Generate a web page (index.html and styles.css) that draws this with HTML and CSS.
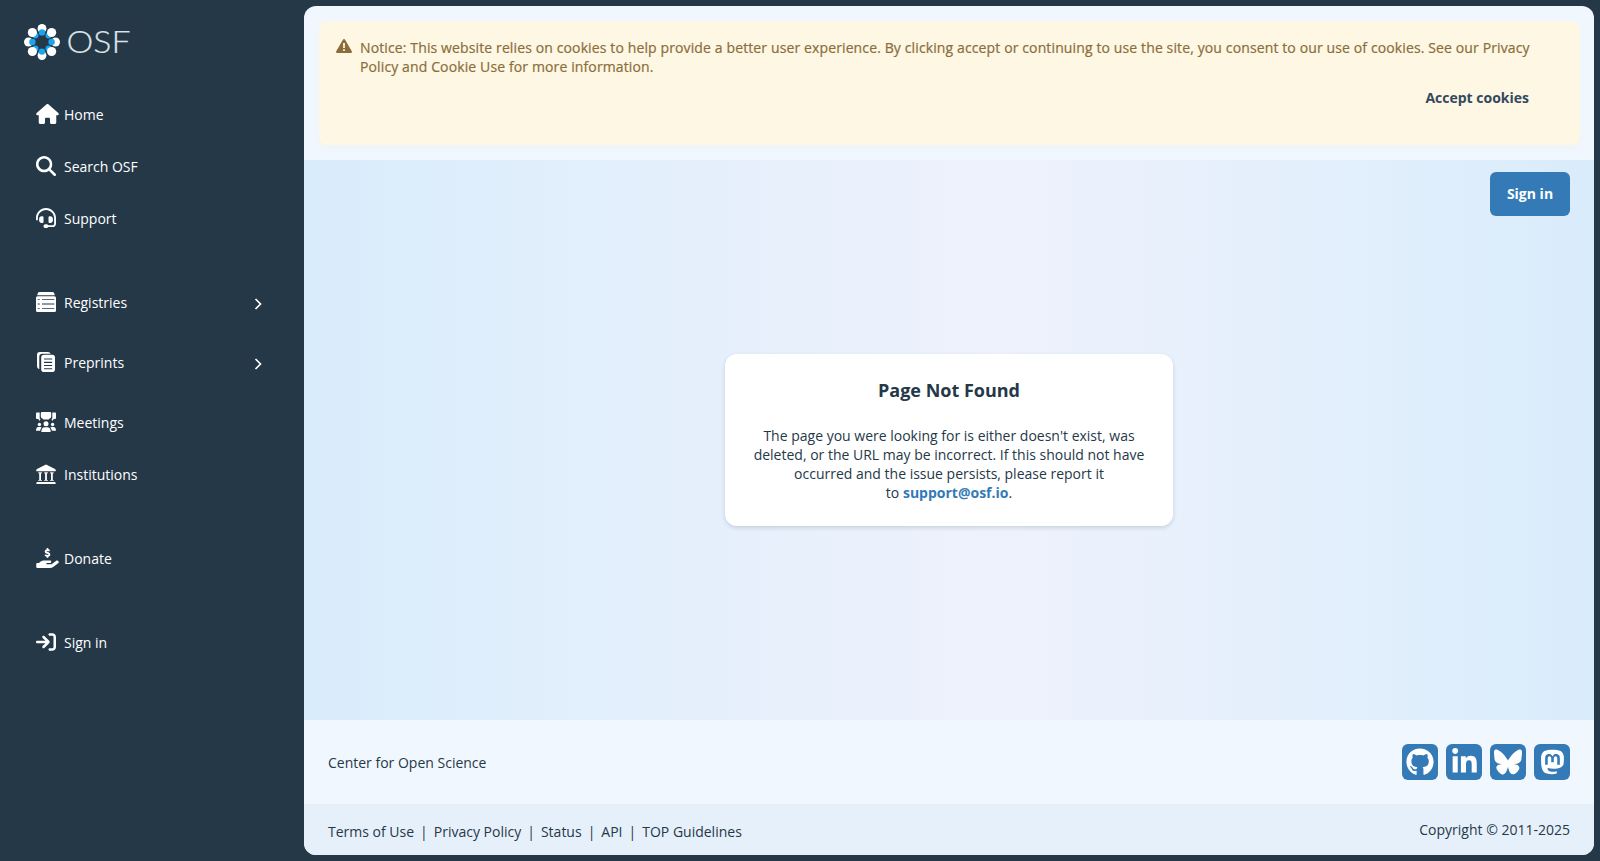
FILE: index.html
```html
<!DOCTYPE html>
<html lang="en">
<head>
    <meta charset="UTF-8">
    <meta name="viewport" content="width=device-width, initial-scale=1.0">
    <title>OSF | Page Not Found</title>
    <link rel="stylesheet" href="styles.css">
</head>
<body>
    <aside class="sidebar">
        <a class="logo" href="#">
            <svg width="112" height="36" viewBox="0 0 112 36">
                <g fill="#fff">
                    <ellipse cx="18" cy="4.6" rx="4.4" ry="4.6"/><ellipse cx="18" cy="31.4" rx="4.4" ry="4.6"/>
                    <ellipse cx="4.4" cy="18" rx="4.4" ry="4.6"/><ellipse cx="31.6" cy="18" rx="4.4" ry="4.6"/>
                </g>
                <g fill="#1aa5ee">
                    <circle cx="11.5" cy="11.5" r="3"/><circle cx="24.5" cy="11.5" r="3"/>
                    <circle cx="11.5" cy="24.5" r="3"/><circle cx="24.5" cy="24.5" r="3"/>
                    <circle cx="18" cy="8.4" r="3.2"/><circle cx="18" cy="27.6" r="3.2"/>
                    <circle cx="8.4" cy="18" r="3.2"/><circle cx="27.6" cy="18" r="3.2"/>
                </g>
                <g fill="#fff">
                    <circle cx="8.4" cy="8.5" r="4.6"/><circle cx="27.6" cy="8.5" r="4.6"/>
                    <circle cx="8.4" cy="27.5" r="4.6"/><circle cx="27.6" cy="27.5" r="4.6"/>
                </g>
                <text class="logo-text" x="42.5" y="29" textLength="64" lengthAdjust="spacingAndGlyphs">OSF</text>
            </svg>
        </a>

        <nav class="nav">
            <a class="nav-item" href="#">
                <svg class="icon icon-wide" viewBox="0 0 576 512"><path d="M575.8 255.5c0 18-15 32.1-32 32.1h-32l.7 160.2c0 2.7-.2 5.4-.5 8.1V472c0 22.1-17.9 40-40 40H456c-1.1 0-2.2 0-3.3-.1c-1.4 .1-2.8 .1-4.2 .1H416 392c-22.1 0-40-17.9-40-40V448 384c0-17.7-14.3-32-32-32H256c-17.7 0-32 14.3-32 32v64 24c0 22.1-17.9 40-40 40H160 128.1c-1.5 0-3-.1-4.5-.2c-1.2 .1-2.4 .2-3.6 .2H104c-22.1 0-40-17.9-40-40V360c0-.9 0-1.9 .1-2.8V287.6H32c-18 0-32-14-32-32.1c0-9 3-17 10-24L266.4 8c7-7 15-8 22-8s15 2 21 7L564.8 231.5c8 7 12 15 11 24z"/></svg>
                <span>Home</span>
            </a>
            <a class="nav-item" href="#">
                <svg class="icon" viewBox="0 0 512 512"><path d="M416 208c0 45.9-14.9 88.3-40 122.7L502.6 457.4c12.5 12.5 12.5 32.8 0 45.3s-32.8 12.5-45.3 0L330.7 376c-34.4 25.2-76.8 40-122.7 40C93.1 416 0 322.9 0 208S93.1 0 208 0S416 93.1 416 208zM208 352a144 144 0 1 0 0-288 144 144 0 1 0 0 288z"/></svg>
                <span>Search OSF</span>
            </a>
            <a class="nav-item" href="#">
                <svg class="icon" viewBox="0 0 512 512"><path d="M256 48C141.1 48 48 141.1 48 256v40c0 13.3-10.7 24-24 24s-24-10.7-24-24V256C0 114.6 114.6 0 256 0S512 114.6 512 256V400.1c0 48.6-39.4 88-88.1 88L313.6 488c-8.3 14.3-23.8 24-41.6 24H240c-26.5 0-48-21.5-48-48s21.5-48 48-48h32c17.8 0 33.3 9.7 41.6 24l110.4 .1c22.1 0 40-17.9 40-40V256c0-114.9-93.1-208-208-208zM144 208h16c17.7 0 32 14.3 32 32V352c0 17.7-14.3 32-32 32H144c-35.3 0-64-28.7-64-64V272c0-35.3 28.7-64 64-64zm224 0c35.3 0 64 28.7 64 64v48c0 35.3-28.7 64-64 64H352c-17.7 0-32-14.3-32-32V240c0-17.7 14.3-32 32-32h16z"/></svg>
                <span>Support</span>
            </a>

            <a class="nav-item nav-parent section-start" href="#">
                <svg class="icon icon-osf" viewBox="0 0 20 20"><path fill-rule="evenodd" d="M3.5 0h13q1.3 0 1.7 1.3l.6 1.9H1.2l.6-1.9Q2.2 0 3.5 0zM1.5 4.2h17q1.5 0 1.5 1.5v12.8q0 1.5-1.5 1.5h-17Q0 20 0 18.5V5.7q0-1.5 1.5-1.5zM1.7 7v.8h2V7zm4.3 0v.8h12.3V7zM1.7 11.6v.8h2v-.8zm4.3 0v.8h12.3v-.8zM1.7 16.2v.8h2v-.8zm4.3 0v.8h12.3v-.8z"/></svg>
                <span>Registries</span>
                <svg class="chevron" viewBox="0 0 8 12"><path d="M1.5 1l5 5-5 5"/></svg>
            </a>
            <a class="nav-item nav-parent" href="#">
                <svg class="icon icon-osf" viewBox="0 0 20 20"><path d="M3.8 0H12q2 0 2.7 1.7H6.5Q3.3 1.7 3.3 5v12.2Q1 16.8 1 14.2V2.8Q1 0 3.8 0z"/><path fill-rule="evenodd" d="M8 2.8h8.2Q19 2.8 19 5.6v11.6q0 2.8-2.8 2.8H8q-2.8 0-2.8-2.8V5.6Q5.2 2.8 8 2.8zM8 6.5v1.1h8.2V6.5zm0 3.3v1.1h8.2V9.8zm0 3.2v1.1h8.2V13zm0 3.2v1.1h8.2v-1.1z"/></svg>
                <span>Preprints</span>
                <svg class="chevron" viewBox="0 0 8 12"><path d="M1.5 1l5 5-5 5"/></svg>
            </a>
            <a class="nav-item nav-gap" href="#">
                <svg class="icon icon-osf" viewBox="0 0 20 20"><path d="M6 0h8q1.2 0 1.2 1.2v3.3Q15.2 6 14 6.3L12.5 7.500h-5L6 6.300Q4.800 6 4.800 4.500V1.200Q4.800 0 6 0zM.8.5h2.900v5.700q0 .8.8.8L3.700 8.900 2.300 7H1Q0 7 0 6V1.500Q0 .5.8.5zM19.200.5h-2.900v5.700q0 .8-.8.8l.8 1.900L17.700 7H19q1 0 1-1V1.500q0-1-.8-1z"/><circle cx="10" cy="11.8" r="2.5"/><circle cx="3.4" cy="12.5" r="1.7"/><circle cx="16.6" cy="12.5" r="1.7"/><path d="M5.3 20q0-4.800 3.500-4.800h2.400q3.500 0 3.500 4.800zM0 18.800q0-3.800 2.400-3.800h2q.8 0 1.300.5-1.300 1.200-1.600 3.300zM20 18.800q0-3.800-2.400-3.800h-2q-.8 0-1.300.5 1.300 1.200 1.600 3.300z"/></svg>
                <span>Meetings</span>
            </a>
            <a class="nav-item" href="#">
                <svg class="icon icon-osf" viewBox="0 0 20 20"><path d="M10 .4l9 4.7q.7.4.7 1.2v1H.3v-1q0-.8.7-1.2z"/><path d="M2.3 8h3.6v1.4H2.3zM8.2 8h3.6v1.4H8.2zM14.1 8h3.6v1.4h-3.6z" opacity=".7"/><path d="M3.2 9h1.8v6.9H6v.8H2.2v-.8h1zM9.1 9h1.8v6.9h1v.8H8.1v-.8h1zM15 9h1.800v6.900h1v.8H14v-.8h1zM.8 18h18.400l.6 1.900H.2z"/></svg>
                <span>Institutions</span>
            </a>

            <a class="nav-item section-start-lg" href="#">
                <svg class="icon icon-wide" viewBox="0 0 576 512"><path d="M312 24V34.5c6.4 1.2 12.6 2.7 18.2 4.2c12.8 3.4 20.4 16.6 17 29.4s-16.6 20.4-29.4 17c-10.9-2.9-21.1-4.9-30.2-5c-7.3-.1-14.7 1.7-19.4 4.4c-2.1 1.3-3.1 2.4-3.5 3c-.3 .5-.7 1.2-.7 2.8c0 .3 0 .5 0 .6c.2 .2 .9 1.2 3.3 2.6c5.8 3.5 14.4 6.2 27.4 10.1l.9 .3c11.1 3.3 25.9 7.8 37.9 15.3c13.7 8.6 26.1 22.9 26.4 44.9c.3 22.5-11.4 38.9-26.7 48.5c-6.7 4.1-13.9 7-21.3 8.8V232c0 13.3-10.7 24-24 24s-24-10.7-24-24V220.6c-9.5-2.3-18.2-5.3-25.6-7.8c-2.1-.7-4.1-1.4-6-2c-12.6-4.2-19.4-17.8-15.2-30.4s17.8-19.4 30.4-15.2c2.6 .9 5 1.7 7.3 2.5c13.6 4.6 23.4 7.9 33.9 8.3c8 .3 15.1-1.6 19.2-4.1c1.9-1.2 2.8-2.2 3.2-2.9c.4-.6 .9-1.8 .8-4.1l0-.2c0-1 0-2.1-4-4.6c-5.7-3.6-14.3-6.4-27.1-10.3l-1.9-.6c-10.8-3.2-25-7.5-36.4-14.4c-13.5-8.1-26.5-22-26.6-44.1c-.1-22.9 12.9-38.6 27.7-47.4c6.4-3.8 13.3-6.4 20.2-8.2V24c0-13.3 10.7-24 24-24s24 10.7 24 24zM568.2 336.3c13.1 17.8 9.3 42.8-8.5 55.9L433.1 485.5c-23.4 17.2-51.6 26.5-80.7 26.5H192 32c-17.7 0-32-14.3-32-32V416c0-17.7 14.3-32 32-32H68.8l44.9-36c22.7-18.2 50.9-28 80-28H272h16 64c17.7 0 32 14.3 32 32s-14.3 32-32 32H288 272c-8.8 0-16 7.2-16 16s7.2 16 16 16H392.6l119.7-88.2c17.8-13.1 42.8-9.3 55.9 8.5z"/></svg>
                <span>Donate</span>
            </a>
            <a class="nav-item section-start-lg" href="#">
                <svg class="icon" viewBox="0 0 512 512"><path d="M352 96l64 0c17.7 0 32 14.3 32 32l0 256c0 17.7-14.3 32-32 32l-64 0c-17.7 0-32 14.3-32 32s14.3 32 32 32l64 0c53 0 96-43 96-96l0-256c0-53-43-96-96-96l-64 0c-17.7 0-32 14.3-32 32s14.3 32 32 32zm-9.4 182.6c12.5-12.5 12.5-32.8 0-45.3l-128-128c-12.5-12.5-32.8-12.5-45.3 0s-12.5 32.8 0 45.3L242.7 224 32 224c-17.7 0-32 14.3-32 32s14.3 32 32 32l210.7 0-73.4 73.4c-12.5 12.5-12.5 32.8 0 45.3s32.8 12.5 45.3 0l128-128z"/></svg>
                <span>Sign in</span>
            </a>
        </nav>
    </aside>

    <div class="content">
        <div class="notice-area">
            <div class="notice">
                <svg class="notice-icon" viewBox="0 0 16 14"><path fill-rule="evenodd" d="M8 0q.7 0 1.1.7l6.7 11.5q.6 1.8-1 1.8H1.2q-1.6 0-1-1.8L6.9.7Q7.3 0 8 0zM7.1 4v5h1.800V4zm0 6.200V12h1.800v-1.800z"/></svg>
                <div class="notice-body">
                    <p>Notice: This website relies on cookies to help provide a better user experience. By clicking accept or continuing to use the site, you consent to our use of cookies. See our Privacy Policy and Cookie Use for more information.</p>
                    <button type="button" class="accept">Accept cookies</button>
                </div>
            </div>
        </div>

        <main class="main">
            <div class="topbar">
                <button type="button" class="signin">Sign in</button>
            </div>
            <div class="message">
                <section class="card">
                    <h1>Page Not Found</h1>
                    <p>The page you were looking for is either doesn't exist, was deleted, or the URL may be incorrect. If this should not have occurred and the issue persists, please report it to&nbsp;<a href="#">support@osf.io</a>.</p>
                </section>
            </div>
        </main>

        <footer>
            <div class="footer-top">
                <span>Center for Open Science</span>
                <div class="socials">
                    <a class="social" href="#" aria-label="GitHub">
                        <svg width="28" height="28" viewBox="0 0 496 512"><path fill-rule="evenodd" d="M244.8 8C106.1 8 0 113.3 0 252c0 110.9 69.8 205.8 169.5 239.2 12.8 2.3 17.3-5.6 17.3-12.1 0-6.2-.3-40.4-.3-61.4 0 0-70 15-84.7-29.8 0 0-11.4-29.1-27.8-36.6 0 0-22.9-15.7 1.6-15.4 0 0 24.9 2 38.6 25.8 21.9 38.6 58.6 27.5 72.9 20.9 2.3-16 8.8-27.1 16-33.7-55.9-6.2-112.3-14.3-112.3-110.5 0-27.5 7.6-41.3 23.6-58.9-2.6-6.5-11.1-33.3 2.6-67.9 20.9-6.5 69 27 69 27 20-5.6 41.5-8.5 62.8-8.5s42.8 2.9 62.8 8.5c0 0 48.1-33.6 69-27 13.7 34.7 5.2 61.4 2.6 67.9 16 17.7 25.8 31.5 25.8 58.9 0 96.5-58.9 104.2-114.8 110.5 9.2 7.9 17 22.9 17 46.4 0 33.7-.3 75.4-.3 83.6 0 6.5 4.6 14.4 17.3 12.1C428.2 457.8 496 362.9 496 252 496 113.3 383.5 8 244.8 8z"/></svg>
                    </a>
                    <a class="social" href="#" aria-label="LinkedIn">
                        <svg width="25" height="28" viewBox="0 0 448 512"><path d="M100.28 448H7.4V148.9h92.88zM53.79 108.1C24.09 108.1 0 83.5 0 53.8a53.79 53.79 0 0 1 107.58 0c0 29.7-24.1 54.3-53.79 54.3zM447.9 448h-92.68V302.4c0-34.7-.7-79.2-48.29-79.2-48.29 0-55.69 37.7-55.69 76.7V448h-92.78V148.9h89.08v40.8h1.3c12.4-23.5 42.69-48.3 87.88-48.3 94 0 111.28 61.9 111.28 142.3V448z"/></svg>
                    </a>
                    <a class="social" href="#" aria-label="Bluesky">
                        <svg width="28" height="28" viewBox="0 0 24 24"><path d="M12 10.8c-1.087-2.114-4.046-6.053-6.798-7.995C2.566.944 1.561 1.266.902 1.565.139 1.908 0 3.08 0 3.768c0 .69.378 5.65.624 6.479.815 2.736 3.713 3.66 6.383 3.364-3.912.58-7.387 2.005-2.83 7.078 5.013 5.19 6.87-1.113 7.823-4.308.953 3.195 2.05 9.271 7.733 4.308 4.267-4.308 1.172-6.498-2.74-7.078 2.67.297 5.568-.628 6.383-3.364.246-.828.624-5.79.624-6.478 0-.69-.139-1.861-.902-2.206-.659-.298-1.664-.62-4.3 1.24C16.046 4.748 13.087 8.687 12 10.8z"/></svg>
                    </a>
                    <a class="social" href="#" aria-label="Mastodon">
                        <svg width="25" height="28" viewBox="0 0 448 512"><path d="M433 179.11c0-97.2-63.71-125.7-63.71-125.7-62.52-28.7-228.56-28.4-290.48 0 0 0-63.72 28.5-63.72 125.7 0 115.7-6.6 259.4 105.63 289.1 40.51 10.7 75.32 13 103.33 11.4 50.81-2.8 79.32-18.1 79.32-18.1l-1.7-36.9s-36.31 11.4-77.12 10.1c-40.41-1.4-83-4.4-89.63-54a102.54 102.54 0 0 1-.9-13.9c85.63 20.9 158.65 9.1 178.75 6.7 56.12-6.7 105-41.3 111.23-72.9 9.8-49.8 9-121.5 9-121.5zm-75.12 125.2h-46.63v-114.2c0-49.7-64-51.6-64 6.9v62.5h-46.33V197c0-58.5-64-56.6-64-6.9v114.2H90.19c0-122.1-5.2-147.9 18.41-175 25.9-28.9 79.82-30.8 103.83 6.1l11.6 19.5 11.6-19.5c24.11-37.1 78.12-34.8 103.83-6.1 23.71 27.3 18.4 53 18.4 175z"/></svg>
                    </a>
                </div>
            </div>
            <div class="footer-bottom">
                <div class="links">
                    <a href="#">Terms of Use</a><span>|</span>
                    <a href="#">Privacy Policy</a><span>|</span>
                    <a href="#">Status</a><span>|</span>
                    <a href="#">API</a><span>|</span>
                    <a href="#">TOP Guidelines</a>
                </div>
                <span class="copyright">Copyright © 2011-2025</span>
            </div>
        </footer>
    </div>
</body>
</html>
```
FILE: styles.css
```css
* {
    box-sizing: border-box;
}

body {
    display: flex;
    height: 100vh;
    margin: 0;
    padding: 6px 6px 6px 0;
    overflow: hidden;
    background-color: #253848;
    color: #253848;
    font-family: "Open Sans", sans-serif;
    font-size: 14px;
    line-height: 19px;
}

a {
    color: inherit;
    text-decoration: none;
}

p,
h1 {
    margin: 0;
}

button {
    border: none;
    padding: 0;
    background: none;
    font: inherit;
    font-weight: 700;
    cursor: pointer;
}

/* Sidebar */
.sidebar {
    width: 304px;
    flex: none;
    padding: 18px 24px 0;
    color: #fff;
}

.logo {
    display: block;
    height: 64px;
}

.logo svg {
    overflow: visible;
}

.logo-text {
    font-family: Lato, sans-serif;
    font-size: 31px;
    font-weight: 300;
    fill: #dfe3e6;
    stroke: #dfe3e6;
    stroke-width: 0.2;
}

.nav-item {
    display: flex;
    align-items: center;
    height: 52px;
    padding: 0 16px 0 12px;
}

.nav-item span {
    flex: 1;
}

.nav-parent {
    height: 60px;
}

.section-start {
    margin-top: 28px;
}

.nav-gap {
    margin-top: 4px;
}

.section-start-lg {
    margin-top: 32px;
}

.icon {
    width: 20px;
    height: 20px;
    margin: 0 8px 1px 0;
    fill: #fff;
}

.icon-wide {
    width: 23px;
    margin-right: 5px;
}

.icon-osf {
    margin-bottom: 0;
}

.chevron {
    width: 8px;
    height: 12px;
    margin: 3px 2px 0 0;
    fill: none;
    stroke: #fff;
    stroke-width: 1.7;
}

/* Content panel */
.content {
    display: flex;
    flex-direction: column;
    flex: 1;
    overflow: hidden;
    border-radius: 12px;
    background-color: #f0f7ff;
}

.notice-area {
    height: 154px;
    padding: 15px 14.5px 14.5px 15px;
}

.notice {
    display: flex;
    height: 124px;
    padding: 17px 50.5px 0 17px;
    border-radius: 8px;
    background-color: #fdf7e3;
    box-shadow: 0 4px 8px rgba(234, 179, 8, 0.04);
    color: #8a6d3b;
    font-weight: 500;
}

.notice p {
    margin-right: -2px;
    letter-spacing: 0.122px;
    -webkit-text-stroke: 0.2px #8a6d3b;
}

.notice-icon {
    width: 16px;
    height: 14px;
    margin: 1px 8px 0 0;
    fill: #8a6d3b;
}

.notice-body {
    flex: 1;
    display: flex;
    flex-direction: column;
    align-items: flex-end;
    gap: 12px;
}

.accept {
    color: #34495e;
}

.main {
    display: flex;
    flex-direction: column;
    flex: 1;
    background: linear-gradient(90deg, #d9ecfb 0%, #eef2fc 54%, #d9ecfb 100%);
}

.topbar {
    display: flex;
    justify-content: flex-end;
    padding: 12px 24px 0;
}

.signin {
    width: 80px;
    height: 44px;
    padding-bottom: 2px;
    border-radius: 6px;
    background-color: #337ab7;
    color: #fff;
}

.message {
    display: flex;
    align-items: center;
    justify-content: center;
    flex: 1;
    padding-bottom: 56px;
}

.card {
    width: 448px;
    padding: 24px;
    border-radius: 12px;
    background-color: #fff;
    box-shadow: 0 2px 4px rgba(38, 57, 71, 0.16);
    text-align: center;
}

.card h1 {
    margin-bottom: 24px;
    font-size: 18px;
    line-height: 24px;
}

.card a {
    color: #337ab7;
    font-weight: 700;
}

/* Footer */
.footer-top {
    display: flex;
    align-items: center;
    justify-content: space-between;
    height: 84px;
    padding: 0 24px;
}

.socials {
    display: flex;
    gap: 8px;
}

.social {
    display: flex;
    align-items: center;
    justify-content: center;
    width: 36px;
    height: 36px;
    padding-bottom: 1px;
    border-radius: 6px;
    background-color: #337ab7;
}

.social svg {
    fill: #fff;
}

.footer-bottom {
    display: flex;
    align-items: center;
    justify-content: space-between;
    height: 51px;
    padding: 0 24px;
    background-color: #e6f0fb;
}

.links {
    display: flex;
    gap: 6px;
    padding-top: 4px;
}
```
